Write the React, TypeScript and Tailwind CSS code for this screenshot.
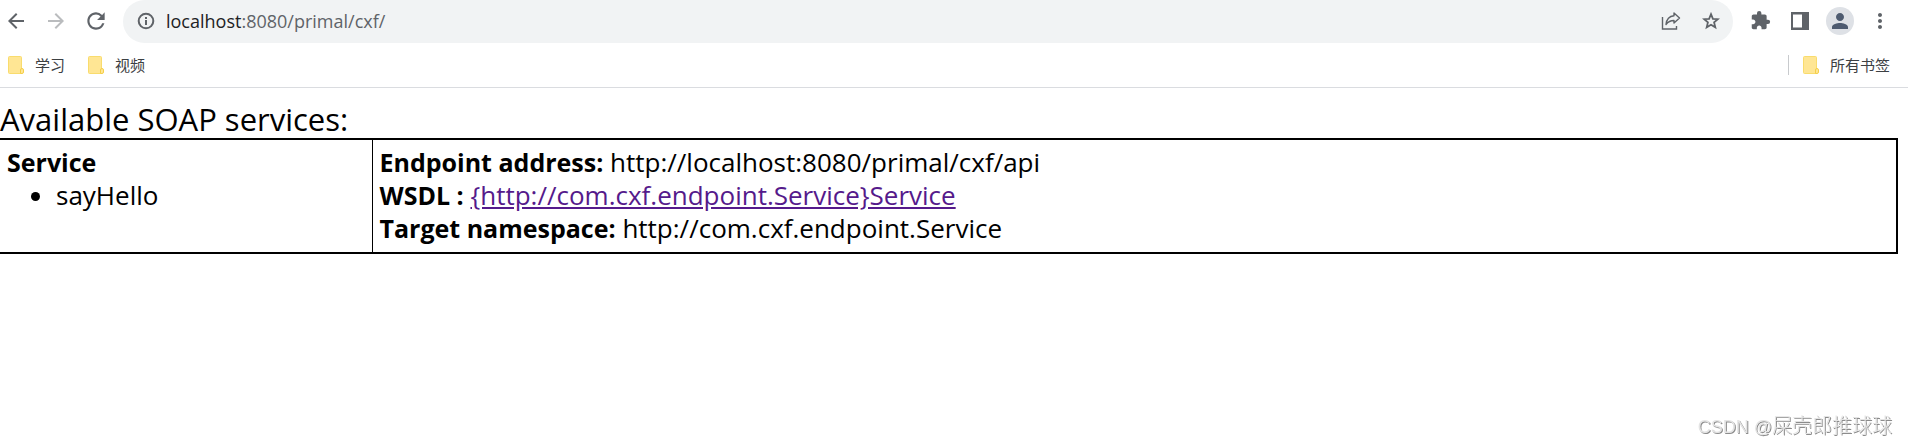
import React from "react";
import {
  MdArrowBack,
  MdArrowForward,
  MdExtension,
  MdMoreVert,
  MdPerson,
  MdRefresh,
} from "react-icons/md";

interface Bookmark {
  id: string;
  label: string;
}

interface ServiceInfo {
  name: string;
  operations: string[];
  address: string;
  wsdl: string;
  namespace: string;
}

const bookmarks: Bookmark[] = [
  { id: "study", label: "学习" },
  { id: "video", label: "视频" },
];

const services: ServiceInfo[] = [
  {
    name: "Service",
    operations: ["sayHello"],
    address: "http://localhost:8080/primal/cxf/api",
    wsdl: "{http://com.cxf.endpoint.Service}Service",
    namespace: "http://com.cxf.endpoint.Service",
  },
];

function FolderIcon() {
  return (
    <svg width="16" height="18" viewBox="0 0 16 18" aria-hidden="true">
      <rect x="0.5" y="0.5" width="13" height="17" rx="1" fill="#ffe694" stroke="#f9dc6d" />
      <path d="M12.500 17.500v-3.500a1.500 1.500 0 0 1 3 0v2a1.500 1.500 0 0 1-1.500 1.500z" fill="#ffe694" stroke="#f5cf4a" />
    </svg>
  );
}

function InfoIcon() {
  return (
    <svg width="18" height="18" viewBox="0 0 18 18" fill="none" stroke="#5f6368" strokeWidth="2" aria-hidden="true">
      <circle cx="9" cy="9" r="7.300" />
      <path d="M9 8v5M9 5v2" />
    </svg>
  );
}

function StarIcon() {
  return (
    <svg width="18" height="18" viewBox="0 0 18 18" fill="none" stroke="#5f6368" strokeWidth="1.8" aria-hidden="true">
      <path d="M9 2.200l1.900 4.600 5 .4-3.800 3.200 1.200 4.900L9 12.700l-4.300 2.600 1.200-4.900-3.800-3.200 5-.4z" />
    </svg>
  );
}

function ShareIcon() {
  return (
    <svg width="20" height="18" viewBox="0 0 20 18" fill="none" stroke="#5f6368" strokeWidth="1.4" aria-hidden="true">
      <path d="M1.500 5v12h14v-3" />
      <path
        d="M13 1l5.500 5-5.500 5V8.500C9.500 8.500 7 9.800 5 12.500 5.500 8 8 4.300 13 3.800z"
        strokeLinejoin="round"
      />
    </svg>
  );
}

function SidePanelIcon() {
  return (
    <svg width="18" height="18" viewBox="0 0 18 18" aria-hidden="true">
      <path d="M0 0h18v18H0zM2 2.500v13h9v-13z" fill="#5f6368" fillRule="evenodd" />
    </svg>
  );
}

interface IconButtonProps {
  label: string;
  className?: string;
  children: React.ReactNode;
}

function IconButton({ label, className = "", children }: IconButtonProps) {
  return (
    <button aria-label={label} className={`flex size-10 items-center justify-center ${className}`}>
      {children}
    </button>
  );
}

function BookmarkButton({ label }: { label: string }) {
  return (
    <button className="flex items-center gap-[11px] text-[15px] leading-5 text-[#3c4043]">
      <FolderIcon />
      {label}
    </button>
  );
}

function Toolbar() {
  return (
    <div className="flex h-[43px] items-center pr-2 text-[#5f6368]">
      <div className="-ml-1 flex w-[127px] items-center pb-0.5">
        <IconButton label="Back">
          <MdArrowBack size={24} />
        </IconButton>
        <IconButton label="Forward" className="text-[#babcbe]">
          <MdArrowForward size={24} />
        </IconButton>
        <IconButton label="Reload">
          <MdRefresh size={26} />
        </IconButton>
      </div>
      <div className="flex h-full flex-1 items-center rounded-full bg-[#f1f3f4] pr-0.5 pb-0.5 pl-3.5">
        <button aria-label="Site information">
          <InfoIcon />
        </button>
        <div className="flex-1 pl-[11px] text-[18px] leading-6">
          <span className="text-[#202124]">localhost</span>:8080/primal/cxf/
        </div>
        <IconButton label="Share">
          <ShareIcon />
        </IconButton>
        <IconButton label="Bookmark this page">
          <StarIcon />
        </IconButton>
      </div>
      <div className="flex items-center pb-0.5 pl-[7px]">
        <IconButton label="Extensions">
          <MdExtension size={21} />
        </IconButton>
        <IconButton label="Side panel">
          <SidePanelIcon />
        </IconButton>
        <IconButton label="Profile">
          <span className="flex size-7 items-center justify-center rounded-full bg-[#dee1e6] text-[#4e5b70]">
            <MdPerson size={24} />
          </span>
        </IconButton>
        <IconButton label="Menu">
          <MdMoreVert size={24} />
        </IconButton>
      </div>
    </div>
  );
}

function BookmarksBar() {
  return (
    <div className="flex h-[45px] items-center justify-between border-b border-[#dadce0] pr-[18px] pl-2">
      <div className="flex gap-[23px]">
        {bookmarks.map((bookmark) => (
          <BookmarkButton key={bookmark.id} label={bookmark.label} />
        ))}
      </div>
      <div className="flex items-center border-l border-[#c8cacd] pl-3.5">
        <BookmarkButton label="所有书签" />
      </div>
    </div>
  );
}

function Label({ children }: { children: React.ReactNode }) {
  return <span className="text-[25px] font-bold">{children}</span>;
}

export default function App() {
  return (
    <div className="min-h-screen bg-white font-['Open_Sans','Noto_Sans_CJK_SC',sans-serif]">
      <header>
        <Toolbar />
        <BookmarksBar />
      </header>

      <main className="pt-3 pr-2.5 text-black">
        <h1 className="text-[31px] leading-[38px]">Available SOAP services:</h1>
        <table className="w-full border-collapse border-y-2 border-r-2 border-black text-[26px] leading-[33px]">
          <tbody>
            {services.map((service) => (
              <tr key={service.name} className="align-top">
                <td className="w-[372px] border-r border-black px-[7px] pt-1.5 pb-[7px]">
                  <Label>{service.name}</Label>
                  <ul className="list-disc pl-[49px]">
                    {service.operations.map((operation) => (
                      <li key={operation}>{operation}</li>
                    ))}
                  </ul>
                </td>
                <td className="px-[7px] pt-1.5 pb-[7px]">
                  <div>
                    <Label>Endpoint address:</Label> {service.address}
                  </div>
                  <div>
                    <Label>WSDL :</Label>{" "}
                    <a href="#wsdl" className="text-[#551a8b] underline">
                      {service.wsdl}
                    </a>
                  </div>
                  <div>
                    <Label>Target namespace:</Label> {service.namespace}
                  </div>
                </td>
              </tr>
            ))}
          </tbody>
        </table>
      </main>

      <div className="fixed right-4 bottom-1.5 font-['Liberation_Sans','Noto_Sans_CJK_SC',sans-serif] text-[20px] leading-6 font-light text-[#e4e4e4] [text-shadow:1px_1px_0_#8c8c8c]">
        <span className="text-[18px]">CSDN @</span>屎壳郎推球球
      </div>
    </div>
  );
}
